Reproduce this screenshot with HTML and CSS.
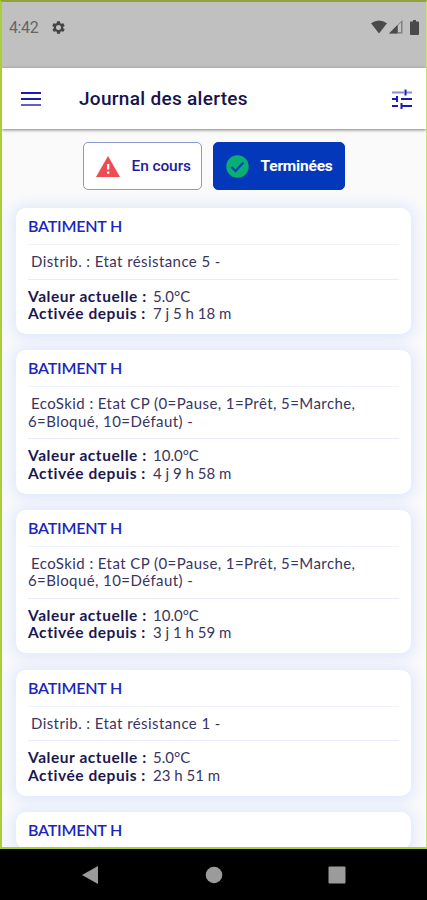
FILE: index.html
```html
<!DOCTYPE html>
<html lang="fr">
<head>
    <meta charset="UTF-8">
    <meta name="viewport" content="width=device-width, initial-scale=1.0">
    <title>Journal des alertes</title>
    <link rel="stylesheet" href="styles.css">
</head>
<body>

    <div class="screen">
        <div class="status-bar">
            <span class="time">4:42</span>
            <svg class="gear" viewBox="0 0 24 24"><path fill-rule="evenodd" d="M19.4 13a7.500 7.500 0 0 0 0-2l2.100-1.600c.2-.2.300-.4.100-.7l-2-3.400c-.1-.2-.4-.3-.6-.2l-2.500 1a7.300 7.300 0 0 0-1.700-1l-.4-2.600c0-.3-.2-.5-.5-.5h-4c-.3 0-.5.2-.5.500l-.4 2.600a7.700 7.700 0 0 0-1.700 1l-2.500-1c-.2-.1-.5 0-.6.2l-2 3.400c-.1.200-.1.500.1.700L4.600 11a8 8 0 0 0 0 2l-2.100 1.600c-.2.200-.3.400-.1.700l2 3.400c.1.200.4.300.6.200l2.500-1c.5.400 1.100.8 1.700 1l.4 2.600c0 .3.200.5.500.5h4c.3 0 .5-.2.500-.5l.4-2.600c.6-.3 1.200-.6 1.700-1l2.500 1c.2.100.5 0 .6-.2l2-3.400c.1-.2.100-.5-.1-.7zM12 16a4 4 0 1 1 0-8 4 4 0 0 1 0 8z"/></svg>
            <div class="status-icons">
                <svg width="16" height="14" viewBox="0 0 16 14"><path d="M0 3.300Q8-2.500 16 3.300L8 13.500z"/></svg>
                <svg width="14" height="14" viewBox="0 0 14 14"><path d="M0 13.500 13.500 0v13.500z" opacity=".55"/><path d="M0 13.500 8.500 5v8.500z"/><path d="M9 5.500 12 2.500V12H9z" fill="#c4c4c4"/></svg>
                <svg class="battery" width="9" height="15" viewBox="0 0 9 15"><path d="M3 0h3v1.500h2q1 0 1 1V14q0 1-1 1H1q-1 0-1-1V2.500q0-1 1-1h2z"/></svg>
            </div>
        </div>

        <div class="header">
            <svg class="menu" viewBox="0 0 20 14"><path d="M0 1h20M0 7h20"/><path d="M0 13h20" opacity=".7"/></svg>
            <h1>Journal des alertes</h1>
            <svg class="filter" viewBox="0 0 20 20"><path d="M0 3.500h12M14 3.500h6" opacity=".5"/><path d="M0 10h5M9 10H20M0 17h6M10 17h10M13.500 .5v6M5 7v6M9.500 14v6"/></svg>
        </div>

        <div class="content">
            <div class="tabs">
                <button class="tab current">
                    <svg width="24" height="21" viewBox="0 0 24 21"><path fill="#ee4c52" d="M12 0 24 21H0z"/><path fill="#fff" d="M11 8h2.300v5.500H11zM11 15.500h2.300v2.300H11z"/></svg>
                    <span>En cours</span>
                </button>
                <button class="tab done">
                    <svg width="23" height="23" viewBox="0 0 23 23"><circle cx="11.500" cy="11.500" r="11.200" fill="#0aad74"/><path d="M5.500 12l4 4 8-8.500" fill="none" stroke="#073fb5" stroke-width="2"/></svg>
                    <span>Terminées</span>
                </button>
            </div>

            <div class="card">
                <h2>BATIMENT H</h2>
                <p class="desc"><span class="first">Distrib. : Etat résistance 5 -</span></p>
                <div class="infos">
                    <div><b>Valeur actuelle :</b><span>5.0°C</span></div>
                    <div><b>Activée depuis :</b><span>7 j 5 h 18 m</span></div>
                </div>
            </div>

            <div class="card">
                <h2>BATIMENT H</h2>
                <p class="desc"><span class="first">EcoSkid : Etat CP (0=Pause, 1=Prêt, 5=Marche,</span><br>6=Bloqué, 10=Défaut) -</p>
                <div class="infos">
                    <div><b>Valeur actuelle :</b><span>10.0°C</span></div>
                    <div><b>Activée depuis :</b><span>4 j 9 h 58 m</span></div>
                </div>
            </div>

            <div class="card">
                <h2>BATIMENT H</h2>
                <p class="desc"><span class="first">EcoSkid : Etat CP (0=Pause, 1=Prêt, 5=Marche,</span><br>6=Bloqué, 10=Défaut) -</p>
                <div class="infos">
                    <div><b>Valeur actuelle :</b><span>10.0°C</span></div>
                    <div><b>Activée depuis :</b><span>3 j 1 h 59 m</span></div>
                </div>
            </div>

            <div class="card">
                <h2>BATIMENT H</h2>
                <p class="desc"><span class="first">Distrib. : Etat résistance 1 -</span></p>
                <div class="infos">
                    <div><b>Valeur actuelle :</b><span>5.0°C</span></div>
                    <div><b>Activée depuis :</b><span>23 h 51 m</span></div>
                </div>
            </div>

            <div class="card">
                <h2>BATIMENT H</h2>
            </div>
        </div>
    </div>

    <div class="nav-bar">
        <svg viewBox="0 0 18 20"><path d="M17 1v18L1 10z"/></svg>
        <svg viewBox="0 0 18 18"><circle cx="9" cy="9" r="8.300"/></svg>
        <svg viewBox="0 0 18 18"><rect x=".5" y=".5" width="17" height="17" rx="1"/></svg>
    </div>

</body>
</html>
```
FILE: styles.css
```css
* {
    box-sizing: border-box;
}
body {
    margin: 0;
    height: 900px;
    display: flex;
    flex-direction: column;
    background: #000;
    color: #1b184f;
    font-family: Lato, sans-serif;
    overflow: hidden;
}
.screen {
    height: 849px;
    display: flex;
    flex-direction: column;
    background: #fafafb;
    border: 2px solid #a9cf38;
    border-top-color: #8fa436;
    border-right: 1px solid #c5df83;
    overflow: hidden;
}
.status-bar {
    flex: none;
    height: 66px;
    display: flex;
    align-items: flex-start;
    padding: 17px 7px 0 7px;
    background: #c0c0c0;
    font-family: Roboto, sans-serif;
}
.time {
    width: 42px;
    font-size: 16px;
    line-height: 18px;
    color: #666;
    letter-spacing: -0.4px;
}
.gear {
    width: 15px;
    height: 15px;
    margin-top: 1px;
    fill: #444;
}
.status-icons {
    display: flex;
    margin-left: auto;
    margin-top: 1px;
    fill: #4a4a4a;
}
.status-icons svg + svg {
    margin-left: 2px;
}
.status-icons .battery {
    margin-left: 7px;
}
.header {
    flex: none;
    position: relative;
    height: 61px;
    display: flex;
    align-items: center;
    padding: 0 14px 0 19px;
    background: #fff;
    box-shadow: 0 1px 3px rgba(0, 0, 0, 0.5);
}
.header svg {
    fill: none;
    stroke: #1c1db0;
    stroke-width: 2;
}
.menu {
    width: 20px;
    height: 14px;
}
.filter {
    width: 20px;
    height: 20px;
    margin-left: auto;
}
h1 {
    margin: 0 0 0 38px;
    font: 500 19px Roboto, sans-serif;
    letter-spacing: 0.3px;
    color: #16134d;
}
.content {
    flex: 1;
    min-height: 0;
    padding: 13px 15px 0 14px;
    overflow: hidden;
}
.tabs {
    display: flex;
    justify-content: center;
    gap: 11px;
    margin-bottom: 18px;
}
.tab {
    height: 48px;
    display: flex;
    align-items: center;
    padding: 0 0 0 12px;
    border: 1px solid #8f97d0;
    border-radius: 5px;
    background: #fff;
    color: #1c1da0;
    font: 500 15.5px Roboto, sans-serif;
    letter-spacing: -0.1px;
}
.tab span {
    margin-left: 12px;
}
.current {
    width: 119px;
}
.done {
    width: 132px;
    background: #0438ba;
    border-color: #0438ba;
    color: #fff;
    font-weight: 700;
    letter-spacing: -0.2px;
}
.card {
    padding: 0 12px;
    margin-bottom: 16.2px;
    border-radius: 10px;
    background: #fff;
    box-shadow: 0 1px 14px 4px #dfe8fb;
}
h2 {
    margin: 0;
    height: 37px;
    border-bottom: 1px solid #f1f3fb;
    font-size: 16px;
    font-weight: 600;
    letter-spacing: -0.2px;
    line-height: 36px;
    color: #1a26bd;
}
.desc {
    margin: 0 -10px 0 0;
    padding: 8px 0;
    font-size: 15px;
    letter-spacing: 0.42px;
    line-height: 17.5px;
    white-space: nowrap;
    color: #38355f;
}
.first {
    margin-left: 3px;
}
.infos {
    padding: 8px 0 11.5px;
    border-top: 1px solid #e9ebfb;
    font-size: 15px;
    line-height: 17.5px;
    color: #38355f;
}
.infos div {
    display: flex;
}
.infos b {
    width: 125px;
    font-size: 15.5px;
    letter-spacing: 0.55px;
    color: #1b184f;
}
.nav-bar {
    flex: 1;
    display: flex;
    align-items: center;
    padding: 1px 81px 0 81px;
    justify-content: space-between;
    fill: #9b9b9b;
}
.nav-bar svg {
    width: 18px;
}
```
